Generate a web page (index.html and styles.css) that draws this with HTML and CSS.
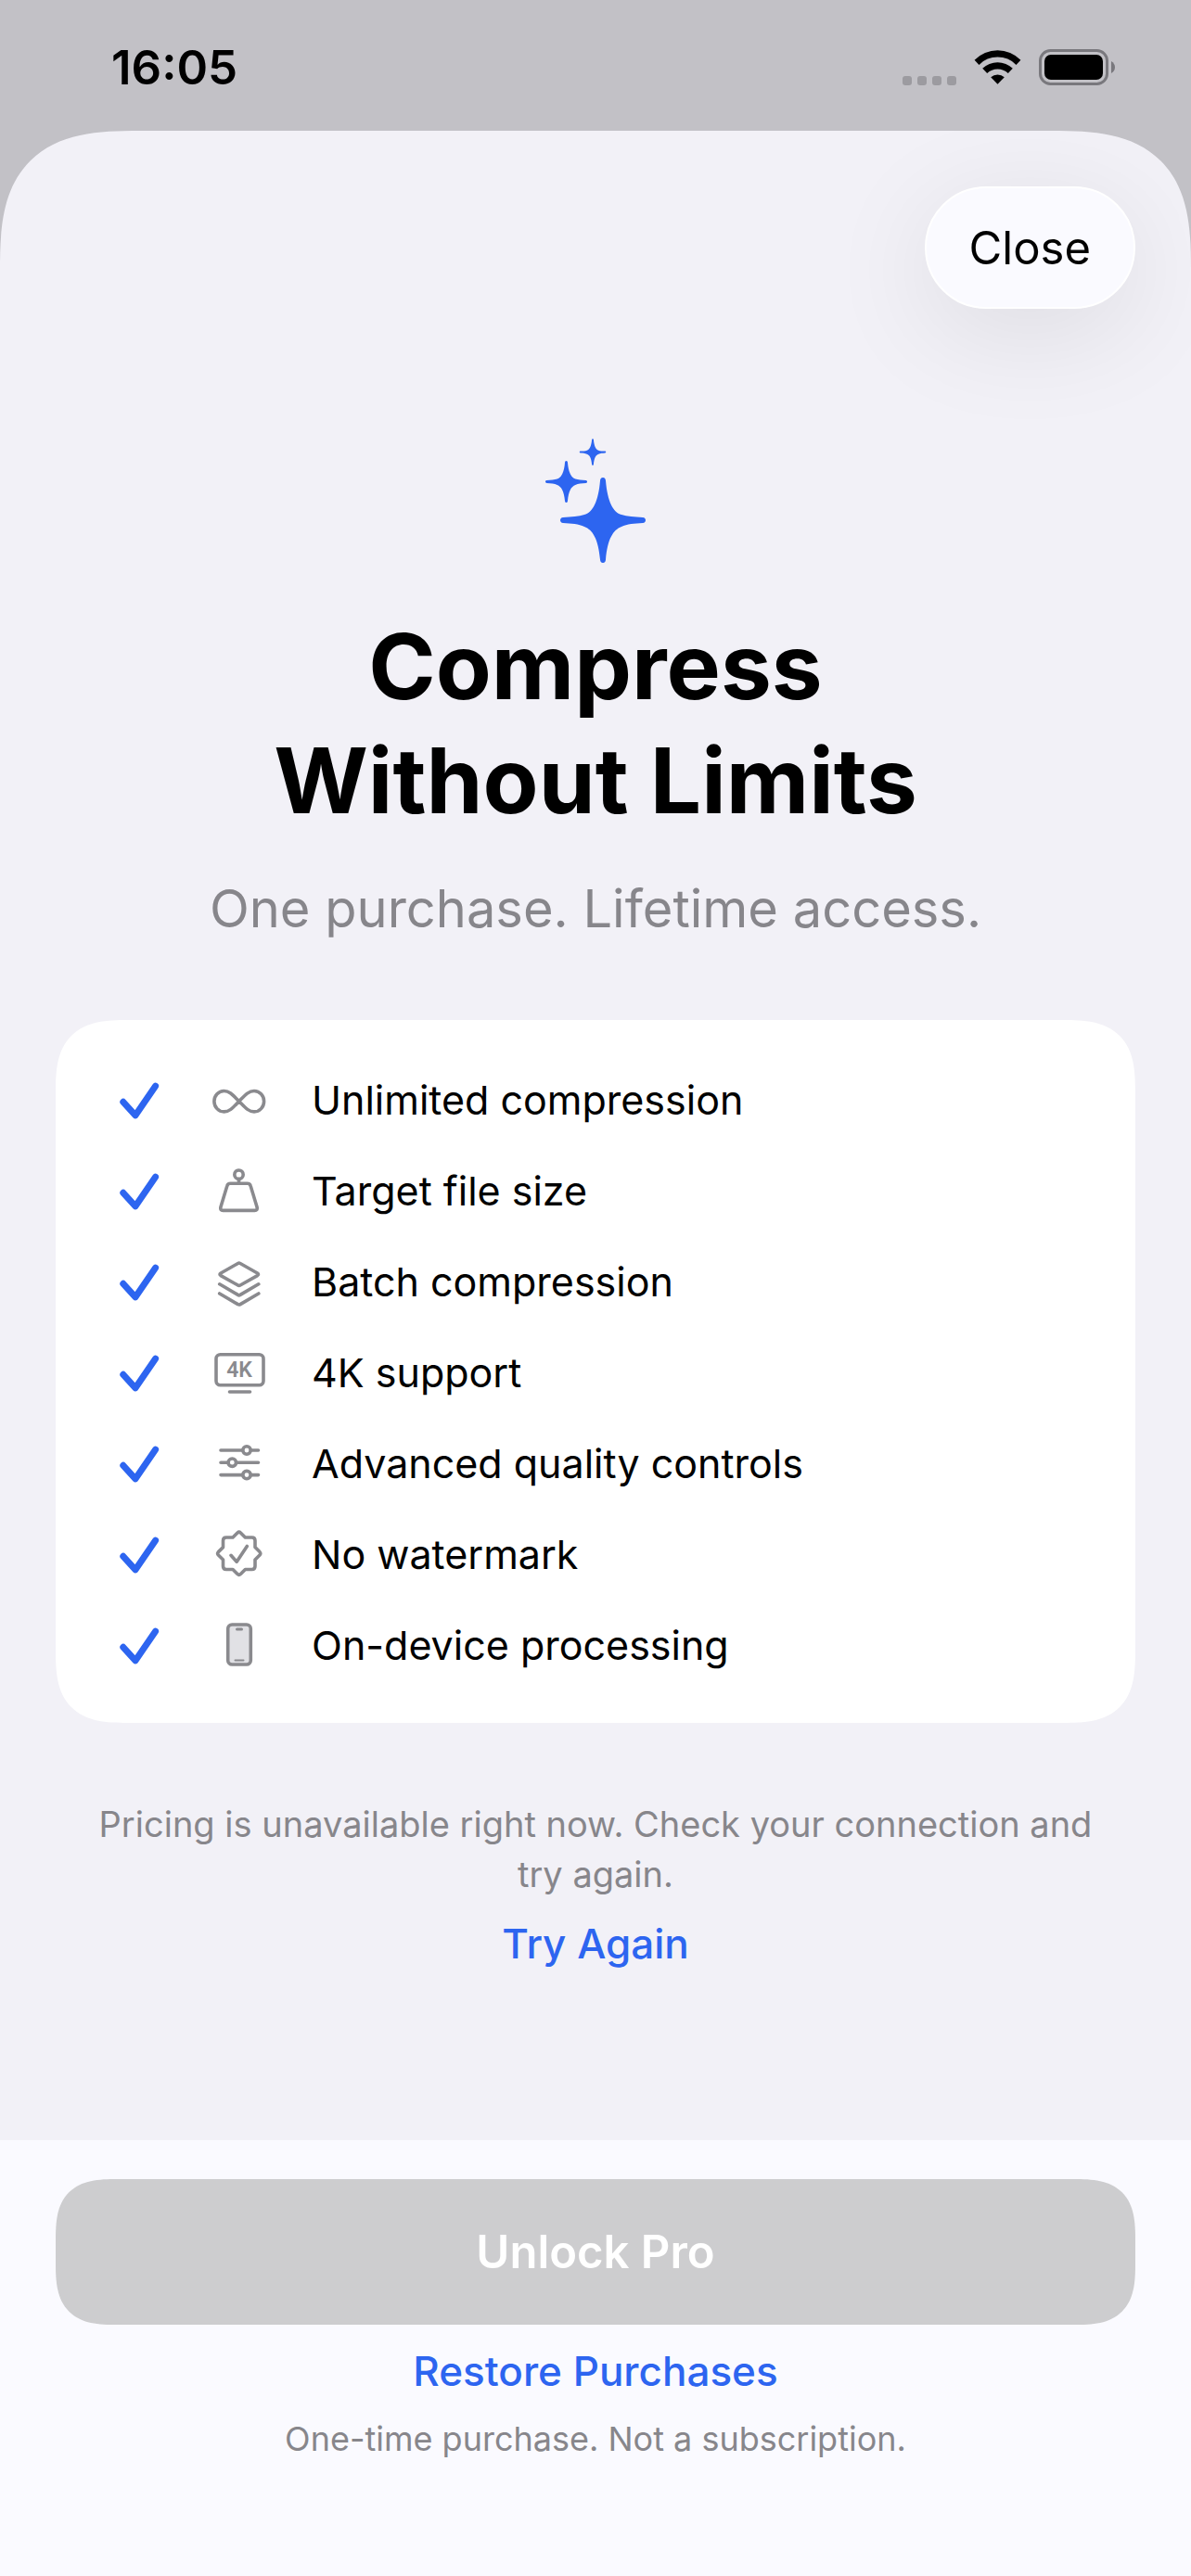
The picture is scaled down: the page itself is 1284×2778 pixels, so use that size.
FILE: index.html
```html
<!DOCTYPE html>
<html lang="en">
<head>
    <meta charset="UTF-8">
    <meta name="viewport" content="width=device-width, initial-scale=1.0">
    <title>Compress Without Limits</title>
    <link rel="stylesheet" href="styles.css">
</head>
<body>
    <!-- Shared check mark -->
    <svg class="sprite" aria-hidden="true">
        <symbol id="check" viewBox="0 0 60 60">
            <path d="M12.8 32.3 26 46.8 47.6 15.2" fill="none" stroke="currentColor" stroke-width="7" stroke-linecap="round" stroke-linejoin="round"/>
        </symbol>
    </svg>

    <header class="status">
        <time class="clock">16:05</time>
        <div class="indicators">
            <svg class="signal" width="58" height="10" viewBox="0 0 58 10">
                <rect width="10" height="10" rx="3"/>
                <rect x="16" width="10" height="10" rx="3"/>
                <rect x="32" width="10" height="10" rx="3"/>
                <rect x="48" width="10" height="10" rx="3"/>
            </svg>
            <svg class="wifi" width="51" height="38" viewBox="0 0 51 38">
                <path d="M.6 10.8A34.8 34.8 0 0 1 50.4 10.8L45.5 15.9A27.8 27.8 0 0 0 5.5 15.9Z"/>
                <path d="M9.2 19.8A23.4 23.4 0 0 1 41.8 19.8L36.8 25A16.2 16.2 0 0 0 14.2 25Z"/>
                <path d="M18.2 29.2A11 11 0 0 1 32.8 29.2L25.5 36.8Z"/>
            </svg>
            <svg class="battery" width="82" height="39" viewBox="0 0 82 39">
                <rect x="1.5" y="1.5" width="72" height="36" rx="11" fill="none" stroke="#79787d" stroke-width="3"/>
                <rect x="6" y="6" width="63" height="27" rx="7"/>
                <path d="M78 13Q82 15.500 82 19.500T78 26Z" fill="#79787d"/>
            </svg>
        </div>
    </header>

    <main class="sheet">
        <nav class="toolbar">
            <button type="button" class="close">Close</button>
        </nav>

        <section class="hero">
            <svg class="sparkles" width="108" height="134" viewBox="0 0 108 134" aria-hidden="true">
                <defs>
                    <path id="spark" d="M0-46C2-46 2.800-44.500 3-42.500C5-20 11-8.500 20-6C26-4 34-3.600 43-3C45-2.800 46-1.500 46 0S45 2.800 43 3C34 3.600 26 4 20 7C11 10.500 5 20 3 42.500C2.800 44.500 2 46 0 46S-2.800 44.500-3 42.500C-5 20-11 10.500-20 7C-26 4-34 3.600-43 3C-45 2.800-46 1.500-46 0S-45-2.800-43-3C-34-3.600-26-4-20-6C-11-8.500-5-20-3-42.500C-2.800-44.500-2-46 0-46Z"/>
                </defs>
                <use href="#spark" transform="translate(62 88)"/>
                <use href="#spark" transform="translate(22.500 46.500) scale(.49)"/>
                <use href="#spark" transform="translate(51 14.500) scale(.31)"/>
            </svg>
            <h1>Compress<br>Without Limits</h1>
            <p class="subtitle">One purchase. Lifetime access.</p>
        </section>

        <ul class="features">
            <li>
                <svg class="check"><use href="#check"/></svg>
                <svg class="icon" viewBox="0 0 60 60" stroke-width="3.6">
                    <path d="M29.700 31.700C24 26 20 20.500 13.500 20.500A10.600 11.200 0 0 0 13.500 42.900C20 42.900 24 37.500 29.700 31.700S39.500 20.500 46 20.500A10.600 11.200 0 0 1 46 42.900C39.500 42.900 35.500 37.500 29.700 31.700Z"/>
                </svg>
                <span>Unlimited compression</span>
            </li>
            <li>
                <svg class="check"><use href="#check"/></svg>
                <svg class="icon" viewBox="0 0 60 60" stroke-width="3.6">
                    <circle cx="29.500" cy="12.700" r="4.700"/>
                    <path d="M29.500 17.500V22M20.500 22.300H38.500Q41.500 22.300 42.200 25L49 47.500Q50 51.400 46.500 51.400H12.500Q9 51.400 10 47.500L16.800 25Q17.500 22.300 20.500 22.300Z"/>
                </svg>
                <span>Target file size</span>
            </li>
            <li>
                <svg class="check"><use href="#check"/></svg>
                <svg class="icon" viewBox="0 0 60 60" stroke-width="3.6">
                    <path d="M28.500 10.500Q29.700 9.800 31 10.500L49.500 21Q51.500 22.300 49.500 23.600L31 34Q29.700 34.800 28.500 34L10 23.600Q8 22.300 10 21Z"/>
                    <path d="M8.700 32.800 28.500 44.400Q29.700 45.200 31 44.400L50.800 32.800M8.700 43 28.500 54.600Q29.700 55.400 31 54.600L50.800 43"/>
                </svg>
                <span>Batch compression</span>
            </li>
            <li>
                <svg class="check"><use href="#check"/></svg>
                <svg class="icon" viewBox="0 0 60 60" stroke-width="3.6">
                    <rect x="5" y="10.700" width="51" height="33" rx="4.500"/>
                    <path d="M19.500 51H41.500"/>
                    <text x="30" y="35" class="badge-text">4K</text>
                </svg>
                <span>4K support</span>
            </li>
            <li>
                <svg class="check"><use href="#check"/></svg>
                <svg class="icon" viewBox="0 0 60 60" stroke-width="3.6">
                    <path d="M10 16H33.500M42.500 16H50.500M10 29.200H18M27 29.200H50.500M10 42.600H33.500M42.500 42.600H50.500"/>
                    <circle cx="38" cy="16" r="4.200"/>
                    <circle cx="22.300" cy="29.200" r="4.200"/>
                    <circle cx="38" cy="42.600" r="4.200"/>
                </svg>
                <span>Advanced quality controls</span>
            </li>
            <li>
                <svg class="check"><use href="#check"/></svg>
                <svg class="icon" viewBox="0 0 60 60" stroke-width="3.6">
                    <path d="M28 7Q29.700 5.500 31.400 7L36.400 12H43.500Q47 12 47 15.500V22.600L52 27.600Q53.500 29.300 52 31L47 36V43Q47 46.500 43.500 46.500H36.400L31.400 51.500Q29.700 53 28 51.500L23 46.500H16Q12.500 46.500 12.500 43V36L7.400 31Q5.900 29.300 7.400 27.600L12.500 22.600V15.500Q12.500 12 16 12H23Z"/>
                    <path d="M21 31.300 27.200 38.200 38.300 21.500"/>
                </svg>
                <span>No watermark</span>
            </li>
            <li>
                <svg class="check"><use href="#check"/></svg>
                <svg class="icon" viewBox="0 0 60 60" stroke-width="3.6">
                    <rect x="17.700" y="8" width="24.600" height="43" rx="4.500" fill="#e1e1e5"/>
                    <path d="M27.500 13H32.500" stroke-width="3"/>
                    <path d="M25.500 46.500H34.500" stroke-width="2"/>
                </svg>
                <span>On-device processing</span>
            </li>
        </ul>

        <section class="pricing">
            <p>Pricing is unavailable right now. Check your connection and try again.</p>
            <button type="button" class="link">Try Again</button>
        </section>

        <footer class="footer">
            <button type="button" class="unlock" disabled>Unlock Pro</button>
            <button type="button" class="link">Restore Purchases</button>
            <p class="caption">One-time purchase. Not a subscription.</p>
        </footer>
    </main>
</body>
</html>
```

FILE: styles.css
```css
* {
    box-sizing: border-box;
}
body {
    display: flex;
    flex-direction: column;
    min-height: 100vh;
    margin: 0;
    background-color: #c2c1c6;
    color: #000;
    font-family: Inter, "Liberation Sans", sans-serif;
}
h1, p, ul {
    margin: 0;
    padding: 0;
}
button {
    padding: 0;
    border: none;
    background: none;
    font-family: inherit;
    cursor: pointer;
}
.sprite {
    display: none;
}

/* Status bar */
.status {
    display: flex;
    justify-content: space-between;
    align-items: center;
    height: 141px;
    padding: 4px 82px 0 120px;
}
.clock {
    font-size: 51px;
    font-weight: 600;
}
.indicators {
    display: flex;
    align-items: flex-end;
    gap: 19px;
}
.signal {
    fill: #9c9ba0;
}

/* Sheet */
.sheet {
    display: flex;
    flex: 1;
    flex-direction: column;
    overflow: hidden;
    border-radius: 114px 114px 0 0;
    background-color: #f2f1f7;
}
.toolbar {
    display: flex;
    justify-content: flex-end;
    padding: 60px 60px 0;
}
.close {
    height: 132px;
    padding: 0 46px;
    border: 2px solid #fff;
    border-radius: 66px;
    background-color: #fafaff;
    box-shadow: 0 24px 120px rgba(0, 0, 0, 0.09);
    color: #000;
    font-size: 49px;
}

/* Title block */
.hero {
    display: flex;
    flex-direction: column;
    align-items: center;
    padding: 140px 60px 0;
    text-align: center;
}
.sparkles {
    fill: #2d65f0;
}
h1 {
    margin-top: 50px;
    font-size: 98px;
    font-weight: 700;
    line-height: 123px;
}
.subtitle {
    margin-top: 39px;
    color: #87868b;
    font-size: 56px;
    line-height: 76px;
}

/* Feature list */
.features {
    display: flex;
    flex-direction: column;
    gap: 42px;
    margin: 82px 60px 0;
    padding: 58px 60px 56px;
    border-radius: 60px;
    background-color: #fff;
    list-style: none;
}
.features li {
    display: flex;
    align-items: center;
    gap: 48px;
    height: 56px;
    font-size: 43px;
}
.check, .icon {
    flex: none;
    width: 60px;
    height: 60px;
}
.check {
    color: #2d65f0;
}
.icon {
    fill: none;
    stroke: #8a8a8e;
    stroke-linecap: round;
    stroke-linejoin: round;
}
.badge-text {
    fill: #8a8a8e;
    stroke: none;
    font-family: Roboto, sans-serif;
    font-size: 23px;
    font-weight: 600;
    text-anchor: middle;
}

/* Pricing message */
.pricing {
    display: flex;
    flex-direction: column;
    align-items: center;
    gap: 18px;
    padding: 82px 90px 80px;
    color: #87868b;
    font-size: 38px;
    line-height: 54px;
    text-align: center;
}
.link {
    color: #2d65f0;
    font-size: 44px;
    font-weight: 500;
    line-height: 60px;
}

/* Purchase bar */
.footer {
    display: flex;
    flex-direction: column;
    align-items: center;
    margin-top: auto;
    padding: 42px 60px 124px;
    background-color: #fafaff;
}
.unlock {
    width: 100%;
    height: 157px;
    margin-bottom: 20px;
    border-radius: 48px;
    background-color: #cdcdcf;
    color: #fff;
    font-size: 49px;
    font-weight: 600;
}
.caption {
    margin-top: 19px;
    color: #87868b;
    font-size: 36px;
    line-height: 48px;
}

/* Smoother corners where the browser has them */
@supports (corner-shape: superellipse(1.5)) {
    .sheet {
        border-radius: 150px 150px 0 0;
        corner-shape: superellipse(1.5);
    }
    .features {
        border-radius: 78px;
        corner-shape: superellipse(1.5);
    }
    .unlock {
        border-radius: 66px;
        corner-shape: superellipse(1.5);
    }
}
```
